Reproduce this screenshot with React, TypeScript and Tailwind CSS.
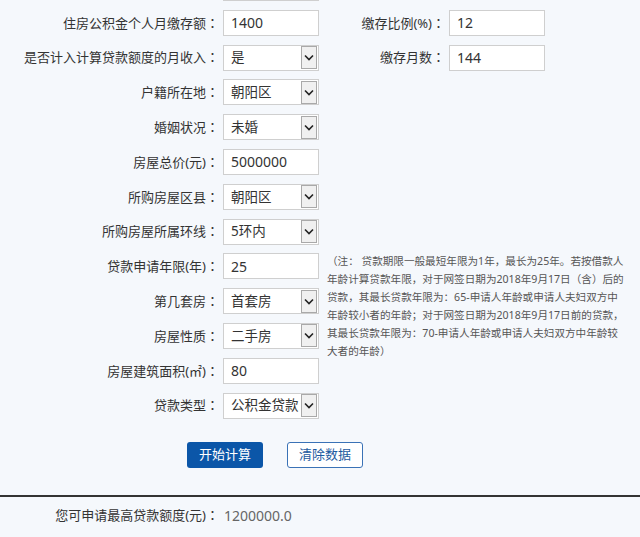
import React from "react";

const font = { fontFamily: '"Noto Sans", "Noto Sans CJK SC", sans-serif' };
const colonFont = { fontFamily: '"Noto Sans CJK TC", sans-serif' };

function TextBox({ value }: { value: string }) {
  return (
    <div className="w-[96px] h-[26px] bg-white border border-[#cfcfcf] flex items-center pl-[7px] text-[14px] text-[#333]">
      {value}
    </div>
  );
}

function SelectBox({ value }: { value: string }) {
  return (
    <div className="w-[96px] h-[26px] bg-white border border-[#cfcfcf] flex items-center pl-[7px] text-[13.5px] text-[#333]">
      <span className="flex-1 whitespace-nowrap overflow-hidden">{value}</span>
      <div className="w-[16px] h-[23px] mr-px bg-[#f0f0f0] border border-[#a9a9a9] flex items-center justify-center shrink-0">
        <svg width="10" height="7" viewBox="0 0 10 7">
          <path d="M1 1.5 L5 5.5 L9 1.5" fill="none" stroke="#222" strokeWidth="1.6" />
        </svg>
      </div>
    </div>
  );
}

function Label({ text, width }: { text: string; width: string }) {
  return (
    <div className={`${width} text-right text-[13px] text-[#333] whitespace-nowrap`}>
      {text}
      {text && (
        <span className="inline-block w-[13px] text-center" style={colonFont}>
          ：
        </span>
      )}
    </div>
  );
}

function Row({ label, children }: { label: string; children: React.ReactNode }) {
  return (
    <div className="flex items-center h-[26px]">
      <Label text={label} width="w-[219px]" />
      <div className="ml-[4px]">{children}</div>
    </div>
  );
}

function RightRow({ label, value }: { label: string; value: string }) {
  return (
    <div className="flex items-center h-[26px]">
      <Label text={label} width="w-[115px]" />
      <div className="ml-[4px]">
        <TextBox value={value} />
      </div>
    </div>
  );
}

const noteLines = [
  "（注： 贷款期限一般最短年限为1年，最长为25年。若按借款人",
  "年龄计算贷款年限，对于网签日期为2018年9月17日（含）后的",
  "贷款，其最长贷款年限为：65-申请人年龄或申请人夫妇双方中",
  "年龄较小者的年龄；对于网签日期为2018年9月17日前的贷款，",
  "其最长贷款年限为：70-申请人年龄或申请人夫妇双方中年龄较",
  "大者的年龄）",
];

export default function App() {
  return (
    <div className="w-[640px] h-[537px] overflow-hidden bg-[#f5f8fc]" style={font}>
      <div className="-mt-[25px] flex flex-col gap-[8.8px]">
        <Row label="">
          <TextBox value="" />
        </Row>
        <div className="flex">
          <div className="w-[330px] flex flex-col gap-[8.8px]">
            <Row label="住房公积金个人月缴存额">
              <TextBox value="1400" />
            </Row>
            <Row label="是否计入计算贷款额度的月收入">
              <SelectBox value="是" />
            </Row>
            <Row label="户籍所在地">
              <SelectBox value="朝阳区" />
            </Row>
            <Row label="婚姻状况">
              <SelectBox value="未婚" />
            </Row>
            <Row label="房屋总价(元)">
              <TextBox value="5000000" />
            </Row>
            <Row label="所购房屋区县">
              <SelectBox value="朝阳区" />
            </Row>
            <Row label="所购房屋所属环线">
              <SelectBox value="5环内" />
            </Row>
            <Row label="贷款申请年限(年)">
              <TextBox value="25" />
            </Row>
            <Row label="第几套房">
              <SelectBox value="首套房" />
            </Row>
            <Row label="房屋性质">
              <SelectBox value="二手房" />
            </Row>
            <Row label="房屋建筑面积(㎡)">
              <TextBox value="80" />
            </Row>
            <Row label="贷款类型">
              <SelectBox value="公积金贷款" />
            </Row>
          </div>
          <div className="flex-1 flex flex-col">
            <div className="flex flex-col gap-[8.8px]">
              <RightRow label="缴存比例(%)" value="12" />
              <RightRow label="缴存月数" value="144" />
            </div>
            <div className="mt-[181px] -ml-[3px] text-[10.6px] leading-[18px] text-[#555]">
              {noteLines.map((l, i) => (
                <div key={i} className="whitespace-nowrap">
                  {l}
                </div>
              ))}
            </div>
          </div>
        </div>
      </div>

      <div className="flex gap-[24px] mt-[23px] pl-[187px]">
        <button className="w-[76px] h-[26px] rounded-[3px] bg-[#0b56a8] text-white text-[13px]">开始计算</button>
        <button className="w-[76px] h-[26px] rounded-[3px] bg-white border border-[#3a72b6] text-[#1d5aa0] text-[13px]">
          清除数据
        </button>
      </div>

      <div className="mt-[27px] h-[2px] bg-[#333]" />

      <div className="flex items-center mt-[7px] h-[24px]">
        <Label text="您可申请最高贷款额度(元)" width="w-[219px]" />
        <div className="ml-[5px] text-[14px] text-[#666]">1200000.0</div>
      </div>
    </div>
  );
}
